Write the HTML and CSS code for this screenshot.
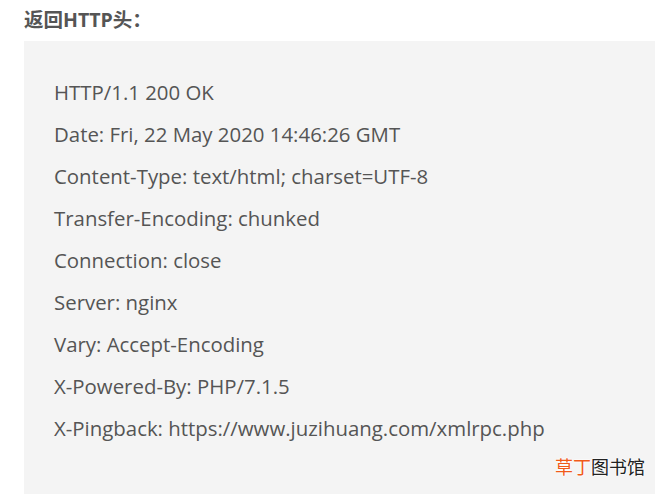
FILE: index.html
```html
<!DOCTYPE html>
<html>
<head>
<meta charset="utf-8">
<link rel="stylesheet" href="styles.css">
</head>
<body>
<div class="page">
  <h3 class="title">返回HTTP头：</h3>
  <div class="box">
    <p class="line">HTTP/1.1 200 OK</p>
    <p class="line">Date: Fri, 22 May 2020 14:46:26 GMT</p>
    <p class="line">Content-Type: text/html; charset=UTF-8</p>
    <p class="line">Transfer-Encoding: chunked</p>
    <p class="line">Connection: close</p>
    <p class="line">Server: nginx</p>
    <p class="line">Vary: Accept-Encoding</p>
    <p class="line">X-Powered-By: PHP/7.1.5</p>
    <p class="line">X-Pingback: https://www.juzihuang.com/xmlrpc.php</p>
    <div class="mark"><span class="mark-red">草丁</span>图书馆</div>
  </div>
</div>
</body>
</html>
```
FILE: styles.css
```css
html, body {
  margin: 0;
  padding: 0;
  background: #fff;
}
.page {
  padding-left: 24px;
  font-family: "Open Sans", "Noto Sans CJK SC", sans-serif;
  color: #555;
}
.title {
  margin: 0;
  height: 41px;
  font-size: 19.5px;
  font-weight: bold;
  line-height: 40px;
  font-family: "Open Sans", "Noto Sans CJK SC", sans-serif;
  color: #555;
}
.box {
  background: #f4f4f4;
  padding: 30px 0 0 30px;
  height: 423px;
}
.line {
  margin: 0;
  font-size: 20.4px;
  line-height: 42px;
}
.mark {
  margin-top: 4px;
  text-align: right;
  padding-right: 10px;
  font-family: "Noto Sans CJK SC", sans-serif;
  font-size: 18px;
  color: #222;
  text-shadow: 0 0 2px #fff, 0 0 2px #fff, 0 0 2px #fff;
}
.mark-red {
  color: #f05a1a;
}
```
